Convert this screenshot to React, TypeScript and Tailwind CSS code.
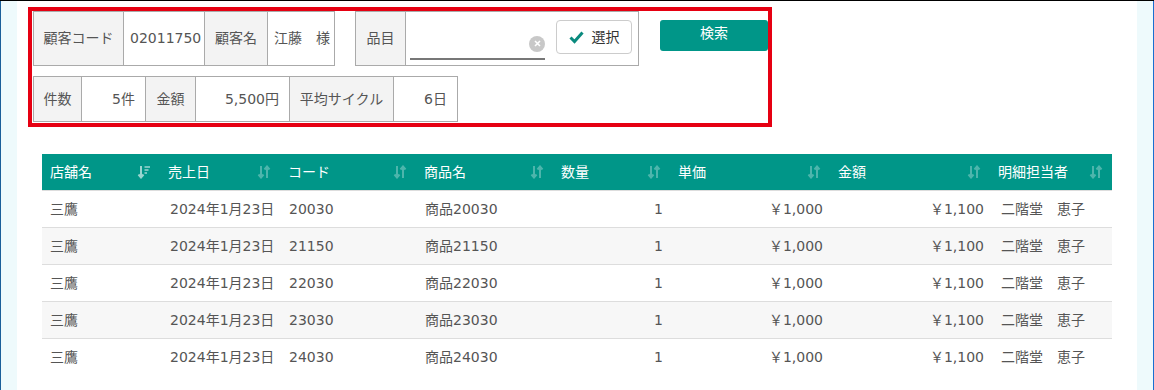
import React from "react";

const FONT = { fontFamily: '"DejaVu Sans", "Noto Sans CJK JP", sans-serif' };

function SortBoth() {
  return (
    <svg width="14" height="14" viewBox="0 0 14 14" className="opacity-30">
      <path d="M4 1 V12 M1.5 9.5 L4 12.5 L6.5 9.5" stroke="#fff" strokeWidth="2" fill="none" />
      <path d="M10 13 V2 M7.5 4.5 L10 1.5 L12.5 4.5" stroke="#fff" strokeWidth="2" fill="none" />
    </svg>
  );
}

function SortDown() {
  return (
    <svg width="14" height="14" viewBox="0 0 14 14" className="opacity-60">
      <path d="M4 1 V12 M1.5 9.5 L4 12.5 L6.5 9.5" stroke="#fff" strokeWidth="2" fill="none" />
      <path d="M7.5 2 H13 M7.5 5 H11.5 M7.5 8 H10" stroke="#fff" strokeWidth="1.6" fill="none" />
    </svg>
  );
}

const cols = [
  { name: "店舗名", w: "w-[118px]", sort: "down" },
  { name: "売上日", w: "w-[120px]" },
  { name: "コード", w: "w-[136px]" },
  { name: "商品名", w: "w-[137px]" },
  { name: "数量", w: "w-[117px]" },
  { name: "単価", w: "w-[160px]" },
  { name: "金額", w: "w-[160px]" },
  { name: "明細担当者", w: "w-[122px]" },
];

const rows = ["20030", "21150", "22030", "23030", "24030"];

function Label({ w, children }: { w: string; children: React.ReactNode }) {
  return (
    <div className={`${w} flex items-center justify-center bg-[#f3f3f3] border-l border-y border-[#aaa] text-[#555]`}>
      {children}
    </div>
  );
}

function Value({ w, children, right, last }: { w: string; children: React.ReactNode; right?: boolean; last?: boolean }) {
  return (
    <div
      className={`${w} flex items-center bg-white border-l border-y border-[#aaa] text-[#555] ${
        right ? "justify-end pr-[10px]" : "pl-[6px]"
      } ${last ? "border-r" : ""}`}
    >
      {children}
    </div>
  );
}

export default function App() {
  return (
    <div className="w-[1154px] h-[390px] bg-white border-t border-black flex text-[14px] overflow-hidden" style={FONT}>
      <div className="w-[17px] h-full bg-[#eefafc] border-l border-[#1a5f9a]" />
      <div className="w-[1120px] h-full flex flex-col">
        {/* filter box */}
        <div className="ml-[11px] mt-[6px] w-[744px] h-[120px] border-4 border-[#e60012] pl-px flex flex-col">
          <div className="flex h-[55px]">
            <div className="flex h-[55px]">
              <Label w="w-[90px]">顧客コード</Label>
              <Value w="w-[81px]">02011750</Value>
              <Label w="w-[63px]">顧客名</Label>
              <Value w="w-[68px]" last>
                江藤　様
              </Value>
            </div>
            <div className="flex h-[55px] ml-[20px]">
              <Label w="w-[50px]">品目</Label>
              <div className="w-[234px] border border-[#aaa] bg-white flex items-center pl-[4px]">
                <div className="relative w-[135px] h-[36px] mt-[6px] border-b-2 border-[#777]">
                  <span className="absolute right-[0px] top-[12px] w-[16px] h-[16px] rounded-full bg-[#c8c8c8] flex items-center justify-center">
                    <svg width="7" height="7" viewBox="0 0 7 7">
                      <path d="M1 1 L6 6 M6 1 L1 6" stroke="#fff" strokeWidth="1.6" />
                    </svg>
                  </span>
                </div>
                <button className="ml-[11px] w-[76px] h-[34px] mb-[3px] border border-[#ccc] rounded-[4px] bg-white flex items-center justify-center gap-[8px] text-[#333]">
                  <svg width="15" height="13" viewBox="0 0 15 13">
                    <path d="M1.5 6.5 L5.5 10.5 L13.5 1.5" stroke="#0a8a7e" strokeWidth="3" fill="none" />
                  </svg>
                  選択
                </button>
              </div>
            </div>
            <button className="ml-[21px] mt-[9px] w-[108px] h-[31px] rounded-[3px] bg-[#009688] text-white flex items-center justify-center pb-[4px]">
              検索
            </button>
          </div>
          <div className="flex h-[46px] mt-[10px]">
            <Label w="w-[48px]">件数</Label>
            <Value w="w-[64px]" right>
              5件
            </Value>
            <Label w="w-[50px]">金額</Label>
            <Value w="w-[94px]" right>
              5,500円
            </Value>
            <Label w="w-[104px]">平均サイクル</Label>
            <Value w="w-[65px]" right last>
              6日
            </Value>
          </div>
        </div>

        {/* table */}
        <div className="ml-[25px] mt-[27px] w-[1070px]">
          <div className="flex h-[36px] bg-[#009688] text-white">
            {cols.map((c) => (
              <div key={c.name} className={`${c.w} flex items-center justify-between pl-[8px] pr-[9px]`}>
                <span>{c.name}</span>
                {c.sort === "down" ? <SortDown /> : <SortBoth />}
              </div>
            ))}
          </div>
          {rows.map((code, i) => (
            <div
              key={code}
              className={`flex h-[37px] items-center border-t border-[#ddd] text-[#555] ${
                i % 2 === 1 ? "bg-[#f7f7f7]" : "bg-white"
              }`}
            >
              <div className="w-[118px] pl-[8px]">三鷹</div>
              <div className="w-[120px] pl-[10px]">2024年1月23日</div>
              <div className="w-[136px] pl-[9px]">{code}</div>
              <div className="w-[137px] pl-[9px]">商品{code}</div>
              <div className="w-[117px] text-right pr-[7px]">1</div>
              <div className="w-[160px] text-right pr-[7px]">￥1,000</div>
              <div className="w-[160px] text-right pr-[6px]">￥1,100</div>
              <div className="w-[122px] pl-[11px]">二階堂　恵子</div>
            </div>
          ))}
        </div>
      </div>
      <div className="w-[17px] h-full bg-[#eefafc] border-r border-[#1a6fd0]" />
    </div>
  );
}
